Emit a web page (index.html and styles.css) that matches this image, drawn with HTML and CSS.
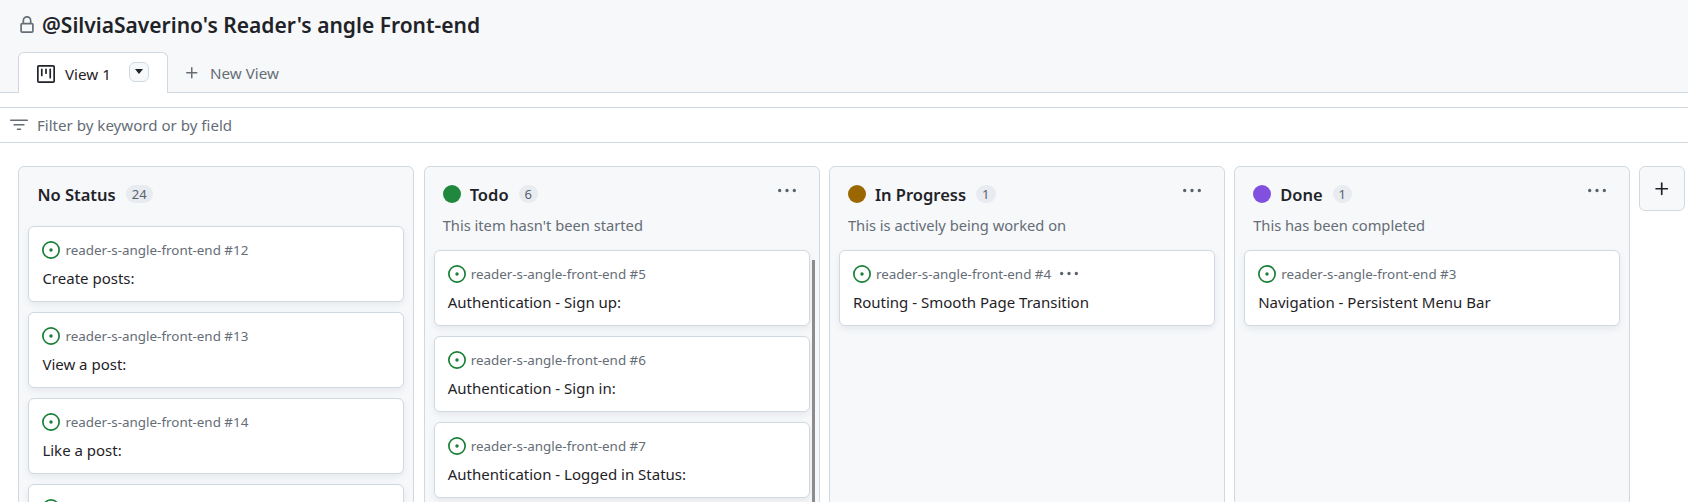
FILE: index.html
```html
<!DOCTYPE html>
<html lang="en">
<head>
<meta charset="utf-8">
<title>@SilviaSaverino's Reader's angle Front-end</title>
<link rel="stylesheet" href="styles.css">
</head>
<body>
<svg class="defs" width="0" height="0" aria-hidden="true">
  <symbol id="issue" viewBox="0 0 16 16"><path fill="#1a7f37" d="M8 9.5a1.5 1.5 0 1 0 0-3 1.5 1.5 0 0 0 0 3Z"/><path fill="#1a7f37" d="M8 0a8 8 0 1 1 0 16A8 8 0 0 1 8 0ZM1.5 8a6.5 6.5 0 1 0 13 0 6.5 6.5 0 0 0-13 0Z"/></symbol>
  <symbol id="kebab" viewBox="0 0 16 16"><path fill="currentColor" d="M8 9a1.5 1.5 0 1 0 0-3 1.5 1.5 0 0 0 0 3ZM1.5 9a1.5 1.5 0 1 0 0-3 1.5 1.5 0 0 0 0 3Zm13 0a1.5 1.5 0 1 0 0-3 1.5 1.5 0 0 0 0 3Z"/></symbol>
  <symbol id="plus" viewBox="0 0 16 16"><path fill="currentColor" d="M7.75 2a.75.75 0 0 1 .75.75V7h4.25a.75.75 0 0 1 0 1.5H8.5v4.25a.75.75 0 0 1-1.5 0V8.5H2.75a.75.75 0 0 1 0-1.5H7V2.75A.75.75 0 0 1 7.75 2Z"/></symbol>
</svg>
<header class="top">
  <h1 class="title">
    <svg class="lock" viewBox="0 0 16 16" width="16" height="16"><path fill="currentColor" d="M4 4a4 4 0 0 1 8 0v2h.25c.966 0 1.75.784 1.75 1.75v5.5A1.75 1.75 0 0 1 12.25 15h-8.5A1.75 1.75 0 0 1 2 13.25v-5.5C2 6.784 2.784 6 3.75 6H4Zm8.25 3.5h-8.5a.25.25 0 0 0-.25.25v5.5c0 .138.112.25.25.25h8.5a.25.25 0 0 0 .25-.25v-5.5a.25.25 0 0 0-.25-.25ZM10.5 6V4a2.5 2.5 0 1 0-5 0v2Z"/></svg>
    <span>@SilviaSaverino's Reader's angle Front-end</span>
  </h1>
  <nav class="tabs">
    <div class="tab">
      <svg class="board" viewBox="0 0 16 16" width="18" height="18"><path fill="currentColor" d="M0 1.75C0 .784.784 0 1.75 0h12.5C15.216 0 16 .784 16 1.75v12.5A1.75 1.75 0 0 1 14.25 16H1.75A1.75 1.75 0 0 1 0 14.25ZM1.75 1.5a.25.25 0 0 0-.25.25v12.5c0 .138.112.25.25.25h12.5a.25.25 0 0 0 .25-.25V1.75a.25.25 0 0 0-.25-.25ZM11.75 3a.75.75 0 0 1 .75.75v7.5a.75.75 0 0 1-1.5 0v-7.5a.75.75 0 0 1 .75-.75Zm-8.25.75a.75.75 0 0 1 1.5 0v5.5a.75.75 0 0 1-1.5 0ZM8 3a.75.75 0 0 1 .75.75v3.5a.75.75 0 0 1-1.5 0v-3.5A.75.75 0 0 1 8 3Z"/></svg>
      <span class="tab-label">View 1</span>
      <span class="caret-btn"><span class="caret"></span></span>
    </div>
    <div class="new-view">
      <svg width="16" height="16"><use href="#plus"/></svg>
      <span>New View</span>
    </div>
  </nav>
</header>
<div class="filter">
  <svg viewBox="0 0 16 16" width="18" height="18"><path fill="currentColor" d="M.75 3h14.5a.75.75 0 0 1 0 1.5H.75a.75.75 0 0 1 0-1.5ZM3 7.75A.75.75 0 0 1 3.75 7h8.5a.75.75 0 0 1 0 1.5h-8.5A.75.75 0 0 1 3 7.75Zm3 4a.75.75 0 0 1 .75-.75h2.5a.75.75 0 0 1 0 1.5h-2.5a.75.75 0 0 1-.75-.75Z"/></svg>
  <span>Filter by keyword or by field</span>
</div>
<main class="board-area">
  <section class="col">
    <div class="col-head bare">
      <div class="col-title"><h2>No Status</h2><span class="count">24</span></div>
    </div>
    <div class="cards">
      <article class="card"><div class="meta"><svg width="18" height="18"><use href="#issue"/></svg><span>reader-s-angle-front-end #12</span></div><p>Create posts:</p></article>
      <article class="card"><div class="meta"><svg width="18" height="18"><use href="#issue"/></svg><span>reader-s-angle-front-end #13</span></div><p>View a post:</p></article>
      <article class="card"><div class="meta"><svg width="18" height="18"><use href="#issue"/></svg><span>reader-s-angle-front-end #14</span></div><p>Like a post:</p></article>
      <article class="card"><div class="meta"><svg width="18" height="18"><use href="#issue"/></svg></div></article>
    </div>
  </section>
  <section class="col">
    <div class="col-head">
      <div class="col-title"><span class="dot green"></span><h2>Todo</h2><span class="count">6</span><svg class="more" width="18" height="18"><use href="#kebab"/></svg></div>
      <p class="desc">This item hasn't been started</p>
    </div>
    <div class="cards">
      <article class="card"><div class="meta"><svg width="18" height="18"><use href="#issue"/></svg><span>reader-s-angle-front-end #5</span></div><p>Authentication - Sign up:</p></article>
      <article class="card"><div class="meta"><svg width="18" height="18"><use href="#issue"/></svg><span>reader-s-angle-front-end #6</span></div><p>Authentication - Sign in:</p></article>
      <article class="card"><div class="meta"><svg width="18" height="18"><use href="#issue"/></svg><span>reader-s-angle-front-end #7</span></div><p>Authentication - Logged in Status:</p></article>
    </div>
    <span class="scrollbar"></span>
  </section>
  <section class="col">
    <div class="col-head">
      <div class="col-title"><span class="dot amber"></span><h2>In Progress</h2><span class="count">1</span><svg class="more" width="18" height="18"><use href="#kebab"/></svg></div>
      <p class="desc">This is actively being worked on</p>
    </div>
    <div class="cards">
      <article class="card"><div class="meta"><svg width="18" height="18"><use href="#issue"/></svg><span>reader-s-angle-front-end #4</span><svg class="card-more" width="18" height="18"><use href="#kebab"/></svg></div><p>Routing - Smooth Page Transition</p></article>
    </div>
  </section>
  <section class="col">
    <div class="col-head">
      <div class="col-title"><span class="dot purple"></span><h2>Done</h2><span class="count">1</span><svg class="more" width="18" height="18"><use href="#kebab"/></svg></div>
      <p class="desc">This has been completed</p>
    </div>
    <div class="cards">
      <article class="card"><div class="meta"><svg width="18" height="18"><use href="#issue"/></svg><span>reader-s-angle-front-end #3</span></div><p>Navigation - Persistent Menu Bar</p></article>
    </div>
  </section>
  <div class="add-col"><svg width="18" height="18"><use href="#plus"/></svg></div>
</main>
</body>
</html>
```

FILE: styles.css
```css
* { box-sizing: border-box; }
html, body { margin: 0; height: 502px; overflow: hidden; background: #fff; }
body { font-family: "Noto Sans", "Open Sans", sans-serif; color: #1f2328; }
.defs { display: block; height: 0; }
h1, h2, p { margin: 0; }

.top { height: 93px; background: #f6f8fa; border-bottom: 1px solid #d1d9e0; padding: 12px 0 0 18px; }
.title { display: flex; align-items: center; gap: 6px; height: 26px; margin-bottom: 14px; font-size: 21px; font-weight: 600; line-height: 26px; }
.lock { color: #656d76; width: 18px; height: 18px; }
.tabs { display: flex; }
.tab { width: 150px; height: 41px; display: flex; align-items: center; padding-left: 18px; background: #fff; border: 1px solid #d1d9e0; border-bottom: 0; border-radius: 6px 6px 0 0; font-size: 15.2px; }
.board { margin-right: 10px; margin-top: 2px; }
.tab-label { width: 64px; margin-top: 2px; }
.caret-btn { width: 20px; height: 20px; display: flex; align-items: center; justify-content: center; border: 1px solid #d1d9e0; border-radius: 6px; margin-top: -3px; background: #f6f8fa; }
.caret { border: 4px solid transparent; border-top: 5px solid #1f2328; border-bottom: 0; }
.new-view { display: flex; align-items: center; gap: 10px; padding-left: 16px; height: 41px; font-size: 15.2px; color: #656d76; }

.filter { height: 36px; margin-top: 14px; border-top: 1px solid #d1d9e0; border-bottom: 1px solid #d1d9e0; display: flex; align-items: center; gap: 9px; padding-left: 10px; font-size: 15.1px; color: #656d76; }

.board-area { display: flex; align-items: flex-start; gap: 9.25px; height: 359px; overflow: hidden; padding: 23px 0 0 18.4px; }
.col { position: relative; width: 396px; height: 350px; flex: none; background: #f6f8fa; border: 1px solid #d1d9e0; border-radius: 6px; padding: 9px; overflow: hidden; }
.col-head { padding: 7px 8px 0 9px; margin-bottom: 15px; }
.col-head.bare { margin-bottom: 21px; }
.col-title { display: flex; align-items: center; height: 22px; }
.col-title h2 { font-size: 16.5px; font-weight: 600; line-height: 22px; margin-top: 2px; }
.dot { width: 18px; height: 18px; border-radius: 50%; margin-right: 9px; }
.green { background: #1f883d; }
.amber { background: #9a6700; }
.purple { background: #8250df; }
.count { min-width: 18px; height: 18px; padding: 0 6px; margin-left: 10px; border-radius: 9px; background: #e8ebef; color: #59636e; font-size: 13px; line-height: 18px; text-align: center; }
.more { margin-left: auto; margin-right: 6px; margin-top: -7px; color: #59636e; }
.desc { margin-top: 10px; font-size: 14.7px; line-height: 20px; color: #656d76; }
.cards { display: flex; flex-direction: column; gap: 10px; }
.card { height: 76px; flex: none; background: #fff; border: 1px solid #d1d9e0; border-radius: 6px; padding: 13px 13px 0; box-shadow: 0 3px 6px rgba(140,149,159,.15); }
.meta { display: flex; align-items: center; gap: 5px; height: 20px; font-size: 13.4px; color: #656d76; }
.card p { margin-top: 8px; font-size: 15px; line-height: 20px; color: #1f2328; }
.card-more { margin-left: 4px; color: #59636e; }
.scrollbar { position: absolute; right: 4px; top: 93px; bottom: 0; width: 3px; background: #8c8c8c; }
.add-col { width: 46px; height: 45px; flex: none; display: flex; align-items: center; justify-content: center; background: #f6f8fa; border: 1px solid #d1d9e0; border-radius: 6px; color: #1f2328; }
```
